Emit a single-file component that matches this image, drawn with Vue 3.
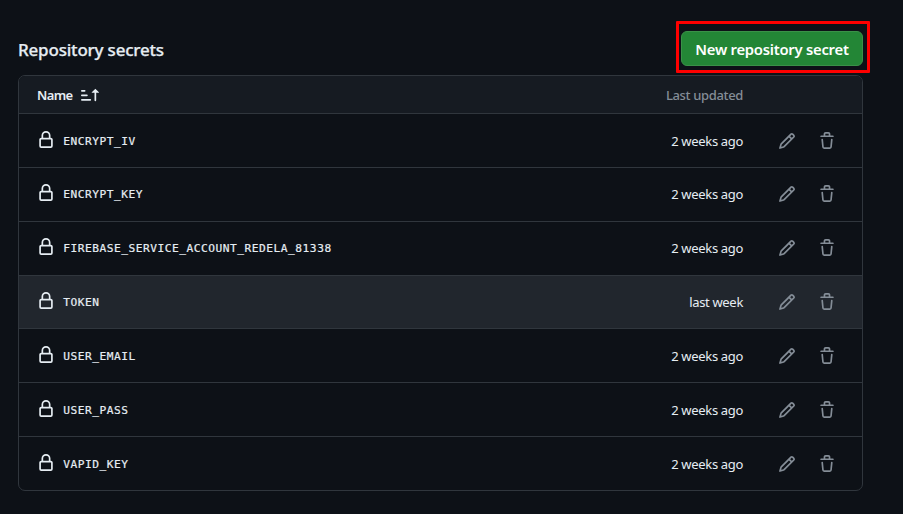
<script setup>
const secrets = [
  { name: 'ENCRYPT_IV', updated: '2 weeks ago' },
  { name: 'ENCRYPT_KEY', updated: '2 weeks ago' },
  { name: 'FIREBASE_SERVICE_ACCOUNT_REDELA_81338', updated: '2 weeks ago' },
  { name: 'TOKEN', updated: 'last week', active: true },
  { name: 'USER_EMAIL', updated: '2 weeks ago' },
  { name: 'USER_PASS', updated: '2 weeks ago' },
  { name: 'VAPID_KEY', updated: '2 weeks ago' },
]
</script>

<template>
  <main class="page">
    <header class="heading">
      <h2 class="title">Repository secrets</h2>
      <div class="highlight">
        <button class="new-secret" type="button">New repository secret</button>
      </div>
    </header>
    <section class="table">
      <div class="row head">
        <span class="name-label">Name</span>
        <svg class="icon sort" viewBox="0 0 16 16"><path d="m12.927 2.573 3 3A.25.25 0 0 1 15.75 6H13.5v6.75a.75.75 0 0 1-1.5 0V6H9.75a.25.25 0 0 1-.177-.427l3-3a.25.25 0 0 1 .354 0ZM0 12.25a.75.75 0 0 1 .75-.75h7.5a.75.75 0 0 1 0 1.5H.75a.75.75 0 0 1-.75-.75Zm0-4a.75.75 0 0 1 .75-.75h4.5a.75.75 0 0 1 0 1.5H.75A.75.75 0 0 1 0 8.25Zm0-4a.75.75 0 0 1 .75-.75h2.5a.75.75 0 0 1 0 1.5H.75A.75.75 0 0 1 0 4.25Z" /></svg>
        <span class="updated-label">Last updated</span>
      </div>
      <div v-for="s in secrets" :key="s.name" class="row item" :class="{ active: s.active }">
        <svg class="icon lock" viewBox="0 0 16 16"><path d="M4 4a4 4 0 0 1 8 0v2h.25c.966 0 1.75.784 1.75 1.75v5.5A1.75 1.75 0 0 1 12.25 15h-8.5A1.75 1.75 0 0 1 2 13.25v-5.5C2 6.784 2.784 6 3.75 6H4Zm8.25 3.5h-8.5a.25.25 0 0 0-.25.25v5.5c0 .138.112.25.25.25h8.5a.25.25 0 0 0 .25-.25v-5.5a.25.25 0 0 0-.25-.25ZM10.5 6V4a2.5 2.5 0 1 0-5 0v2Z" /></svg>
        <code class="secret">{{ s.name }}</code>
        <span class="updated">{{ s.updated }}</span>
        <svg class="icon pencil" viewBox="0 0 16 16"><path d="M11.013 1.427a1.75 1.75 0 0 1 2.474 0l1.086 1.086a1.75 1.75 0 0 1 0 2.474l-8.61 8.61c-.21.21-.47.364-.756.445l-3.251.93a.75.75 0 0 1-.927-.928l.929-3.25c.081-.286.235-.547.445-.758l8.61-8.61Zm.176 4.823L9.75 4.81l-6.286 6.287a.253.253 0 0 0-.064.108l-.558 1.953 1.953-.558a.253.253 0 0 0 .108-.064Zm1.238-3.763a.25.25 0 0 0-.354 0L10.811 3.75l1.439 1.44 1.263-1.263a.25.25 0 0 0 0-.354Z" /></svg>
        <svg class="icon trash" viewBox="0 0 16 16"><path d="M11 1.75V3h2.25a.75.75 0 0 1 0 1.5H2.75a.75.75 0 0 1 0-1.5H5V1.75C5 .784 5.784 0 6.75 0h2.5C10.216 0 11 .784 11 1.75ZM4.496 6.675l.66 6.6a.25.25 0 0 0 .249.225h5.19a.25.25 0 0 0 .249-.225l.66-6.6a.75.75 0 0 1 1.492.149l-.66 6.6A1.748 1.748 0 0 1 10.595 15h-5.19a1.75 1.75 0 0 1-1.741-1.575l-.66-6.6a.75.75 0 1 1 1.492-.15ZM6.5 1.75V3h3V1.75a.25.25 0 0 0-.25-.25h-2.5a.25.25 0 0 0-.25.25Z" /></svg>
      </div>
    </section>
  </main>
</template>

<style>
body {
  margin: 0;
  background: #0d1117;
}
</style>

<style scoped>
.page {
  box-sizing: border-box;
  width: 903px;
  height: 514px;
  padding: 21px 33px 0 18px;
  background: #0d1117;
  color: #e6edf3;
  font-family: "Noto Sans", "Open Sans", sans-serif;
}
.heading {
  display: flex;
  justify-content: space-between;
  height: 54px;
}
.title {
  margin: 15px 0 0;
  font-size: 17px;
  line-height: 28px;
  font-weight: 500;
  letter-spacing: -0.2px;
  -webkit-text-stroke: 0.25px currentColor;
  white-space: nowrap;
}
.highlight {
  box-sizing: border-box;
  width: 194px;
  height: 52px;
  padding: 7px 0 0 2px;
  border: 3px solid #fe0000;
  border-radius: 1px;
}
.new-secret {
  box-sizing: border-box;
  display: block;
  width: 182px;
  height: 35px;
  padding: 1px 0 0;
  border: 1px solid #3a9148;
  border-radius: 6px;
  background: #238636;
  color: #fff;
  font: 600 14.8px/32px "Noto Sans", "Open Sans", sans-serif;
  letter-spacing: -0.25px;
  white-space: nowrap;
}
.table {
  box-sizing: border-box;
  width: 845px;
  height: 416px;
  border: 1px solid #30363d;
  border-radius: 7px;
  overflow: hidden;
}
.row {
  box-sizing: border-box;
  display: flex;
  align-items: center;
}
.head {
  height: 37px;
  padding: 0 119px 0 18px;
  background: #161b22;
  font-size: 13px;
}
.name-label {
  width: 44px;
  font-weight: 600;
  letter-spacing: -0.6px;
}
.updated-label {
  margin-left: auto;
  color: #848d97;
  font-weight: 500;
  letter-spacing: -0.35px;
}
.item {
  height: 53.86px;
  padding: 0.3px 26px 0 17.7px;
  border-top: 1px solid #30363d;
}
.active {
  background: #21262d;
}
.icon {
  flex: none;
  width: 18px;
  height: 18px;
  fill: currentColor;
}
.lock {
  margin-bottom: 2px;
}
.secret {
  margin: 2px 0 0 8.5px;
  font: 11.2px/18px "DejaVu Sans Mono", monospace;
  letter-spacing: 0.52px;
  -webkit-text-stroke: 0.2px currentColor;
}
.updated {
  margin-left: auto;
  font-size: 13px;
  line-height: 18px;
  letter-spacing: -0.33px;
}
.pencil {
  margin-left: 35px;
  color: #848d97;
}
.trash {
  margin-left: 22px;
  color: #848d97;
}
</style>
